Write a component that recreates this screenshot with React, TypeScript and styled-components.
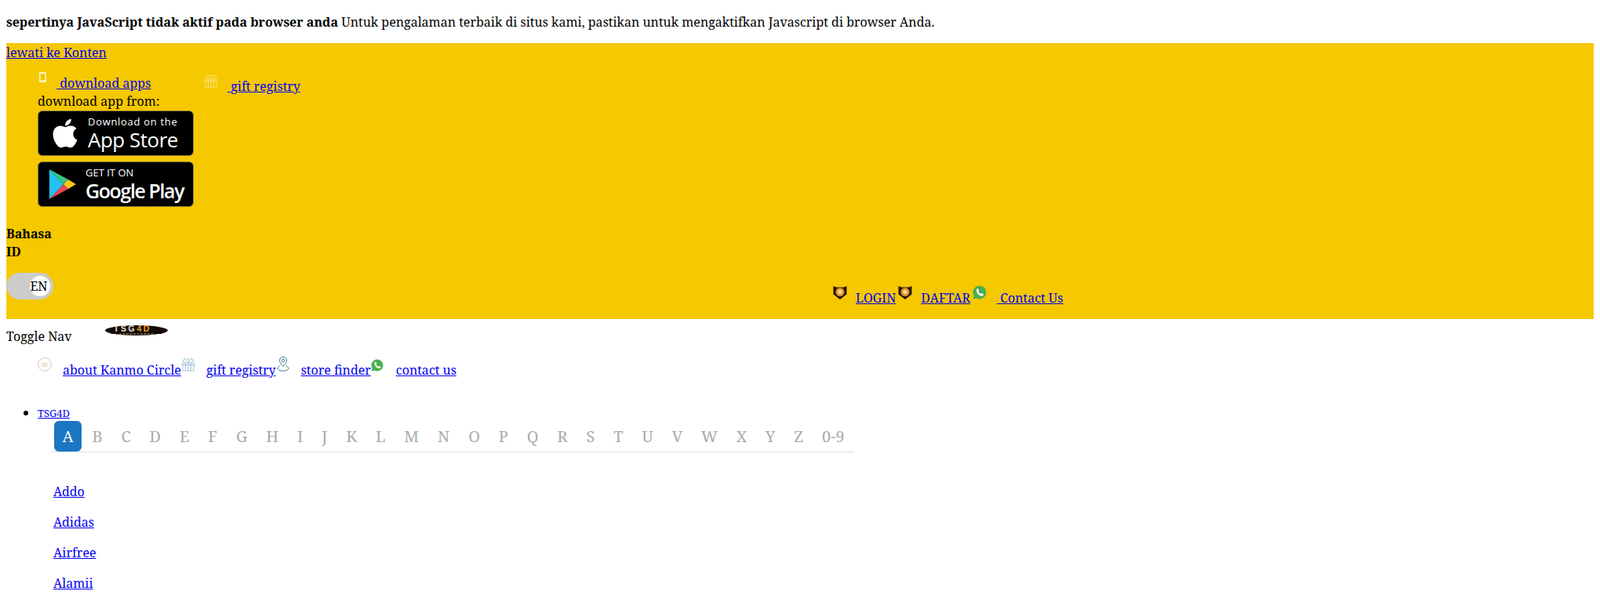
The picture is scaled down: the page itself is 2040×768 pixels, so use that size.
import styled, { createGlobalStyle } from "styled-components";
import { FaApple } from "react-icons/fa";

const letters = "A B C D E F G H I J K L M N O P Q R S T U V W X Y Z 0-9".split(" ");
const brands = ["Addo", "Adidas", "Airfree", "Alamii"];

const GlobalStyle = createGlobalStyle`
  html {
    overflow: hidden;
    background: #fff;
  }
  body {
    margin: 8px;
    color: #000;
    font-family: "Noto Serif", "DejaVu Serif", serif;
    font-size: 16px;
  }
  a {
    color: #0000ee;
    text-decoration: underline;
  }
`;

const PhoneIcon = () => (
  <svg width="18" height="18" viewBox="0 0 18 18">
    <rect x="2" y="2" width="9" height="13" rx="1.500" fill="#fff6c8" />
    <rect x="3.500" y="4" width="6" height="8.500" fill="#f5c800" />
  </svg>
);

const GiftIcon = ({ color }: { color: string }) => (
  <svg width="18" height="18" viewBox="0 0 18 18" fill="none" stroke={color} strokeWidth="0.8">
    <path d="M1 7h16v2.500H1ZM2 9.500h14V17H2Z" />
    <path d="M5.500 7v10M9 7v10M12.500 7v10" />
    <path d="M5 7 2 3.500 4 3l.5-2L7 3.500 9 1l2 2.500L13.500 1l.5 2 2 .5L13 7" />
    <path d="M7 3.500 9 7l2-3.500" />
  </svg>
);

const CircleIcon = () => (
  <svg width="18" height="18" viewBox="0 0 18 18" fill="none">
    <circle cx="9" cy="9" r="8.300" stroke="#c9c1b4" strokeWidth="0.9" />
    <path d="M6 7h6M4 9.200h10M5.500 11.400h7" stroke="#dcc9a6" strokeWidth="0.9" />
  </svg>
);

const PinIcon = () => (
  <svg width="18" height="20" viewBox="0 0 18 20" fill="none" stroke="#3f7f8f" strokeWidth="1">
    <path d="M9 13.500C6.300 10.300 4.500 8.300 4.500 5.800a4.500 4.500 0 0 1 9 0c0 2.500-1.800 4.500-4.500 7.700Z" />
    <circle cx="9" cy="5.800" r="1.800" />
    <path d="M5.500 12 1.500 15.800 5 19h8l3.500-3.200L12.500 12" />
  </svg>
);

const ChatIcon = ({ size }: { size: number }) => (
  <svg width={size} height={size} viewBox="0 0 16 16">
    <path d="M8 .5a7.500 7.500 0 1 1-3.600 14.100L.6 15.500l1-3.600A7.500 7.500 0 0 1 8 .5Z" fill="#4cae50" />
    <path
      d="M5.500 3.800c-.8.500-1.300 1.300-1.100 2.400.4 2.600 3 5.300 5.500 5.700 1.100.2 2-.3 2.500-1.100.2-.4.100-.7-.2-.9l-1.500-.9c-.3-.2-.6-.1-.8.100l-.5.600c-1.200-.4-2.400-1.600-2.900-2.900l.6-.5c.2-.2.300-.5.100-.8l-.9-1.500c-.1-.2-.3-.3-.3-.2Z"
      fill="#fff"
    />
  </svg>
);

const CrestIcon = () => (
  <svg width="18" height="18" viewBox="0 0 18 18">
    <path d="M0.500 1 4.500 2.500h9L17.500 1v10.500L9 18 .5 11.500Z" fill="#2a1505" />
    <circle cx="9" cy="8.500" r="5.500" fill="#d9932c" />
    <circle cx="9" cy="8.500" r="2.800" fill="#f7d98a" />
  </svg>
);

const PlayIcon = () => (
  <svg width="34" height="38" viewBox="0 0 34 38">
    <path d="M0 0v38l18-19Z" fill="#22c3f3" />
    <path d="M0 0 24 13 18 19Z" fill="#35c779" />
    <path d="M0 38 24 25 18 19Z" fill="#ee4454" />
    <path d="M24 13 34 19 24 25 18 19Z" fill="#fcc419" />
  </svg>
);

const TsgLogo = () => (
  <svg width="80" height="13" viewBox="0 0 80 13" overflow="visible">
    <ellipse cx="40" cy="6.500" rx="40" ry="6.500" fill="#150a03" />
    <text x="11" y="8.300" fontFamily="Liberation Sans, sans-serif" fontWeight="700" fontSize="10.500" letterSpacing="2.600" fill="#e8e4da">
      TSG
      <tspan fill="#f0a020">4D</tspan>
    </text>
    <path d="M18 11h44" stroke="#cfc7b8" strokeWidth="0.8" strokeDasharray="3 1.500" />
  </svg>
);

export default function App() {
  return (
    <>
      <GlobalStyle />
      <Notice>
        <strong>sepertinya JavaScript tidak aktif pada browser anda</strong> Untuk pengalaman
        terbaik di situs kami, pastikan untuk mengaktifkan Javascript di browser Anda.
      </Notice>

      <TopPanel>
        <SkipLink href="#content">lewati ke Konten</SkipLink>
        <TopLinks>
          <DownloadItem>
            <IconLink href="#apps">
              <PhoneIcon />
              <LinkLabel $gap={6}>{"\u00a0"}download apps</LinkLabel>
            </IconLink>
            <div>download app from:</div>
            <Badge $gap={8} $inset={13}>
              <FaApple size={42} color="#fff" />
              <BadgeText>
                <BadgeSmall>Download on the</BadgeSmall>
                <BadgeLarge>App Store</BadgeLarge>
              </BadgeText>
            </Badge>
            <Badge $gap={12} $inset={14}>
              <PlayIcon />
              <BadgeText>
                <BadgeSmall $upper>GET IT ON</BadgeSmall>
                <BadgeLarge $google>Google Play</BadgeLarge>
              </BadgeText>
            </Badge>
          </DownloadItem>
          <GiftItem>
            <IconLink href="#gift">
              <GiftIcon color="#fbe58a" />
              <LinkLabel $gap={12}>{"\u00a0"}gift registry</LinkLabel>
            </IconLink>
          </GiftItem>
        </TopLinks>

        <LanguageHeading>Bahasa</LanguageHeading>
        <LanguageHeading>ID</LanguageHeading>

        <BottomBar>
          <Toggle>
            <Knob>EN</Knob>
          </Toggle>
          <AccountLinks>
            <IconLink href="#login">
              <CrestIcon />
              <LinkLabel $gap={11}>LOGIN</LinkLabel>
            </IconLink>
            <IconLink href="#register">
              <CrestIcon />
              <LinkLabel $gap={11}>DAFTAR</LinkLabel>
            </IconLink>
            <IconLink href="#contact">
              <ChatIcon size={18} />
              <LinkLabel $gap={13}>{"\u00a0"}Contact Us</LinkLabel>
            </IconLink>
          </AccountLinks>
        </BottomBar>
      </TopPanel>

      <BrandRow>
        <span>Toggle Nav</span>
        <LogoLink href="#home">
          <TsgLogo />
        </LogoLink>
      </BrandRow>

      <ServiceLinks>
        <IconLink href="#about">
          <CircleIcon />
          <LinkLabel $gap={14}>about Kanmo Circle</LinkLabel>
        </IconLink>
        <IconLink href="#gift">
          <GiftIcon color="#8fb8cc" />
          <LinkLabel $gap={14}>gift registry</LinkLabel>
        </IconLink>
        <IconLink href="#stores">
          <PinIcon />
          <LinkLabel $gap={14}>store finder</LinkLabel>
        </IconLink>
        <IconLink href="#contact">
          <ChatIcon size={16} />
          <LinkLabel $gap={16}>contact us</LinkLabel>
        </IconLink>
      </ServiceLinks>

      <MenuList>
        <li>
          <SmallLink href="#tsg4d">TSG4D</SmallLink>
          <Tabs>
            {letters.map((letter, index) => (
              <Tab key={letter} $active={index === 0}>
                {letter}
              </Tab>
            ))}
          </Tabs>
          <BrandList>
            {brands.map((brand) => (
              <a key={brand} href="#brand">
                {brand}
              </a>
            ))}
          </BrandList>
        </li>
      </MenuList>
    </>
  );
}

const Notice = styled.p`
  margin: 8px 0 15px;
  padding-top: 1px;
  line-height: 23px;
`;

const TopPanel = styled.div`
  background: #f5c800;
  height: 352px;
  line-height: 23px;
`;

const SkipLink = styled.a`
  display: block;
  width: max-content;
  padding-top: 1px;
`;

const TopLinks = styled.div`
  display: flex;
  padding: 11px 0 0 40px;
  height: 197px;
`;

const DownloadItem = styled.div`
  width: 212px;
`;

const GiftItem = styled.div`
  padding-top: 4px;
`;

const IconLink = styled.a`
  svg {
    vertical-align: 4px;
  }
`;

const LinkLabel = styled.span<{ $gap: number }>`
  margin-left: ${(p) => p.$gap}px;
`;

const Badge = styled.div<{ $gap: number; $inset: number }>`
  width: 199px;
  height: 58px;
  margin-bottom: 7px;
  box-sizing: border-box;
  display: flex;
  align-items: center;
  gap: ${(p) => p.$gap}px;
  padding-left: ${(p) => p.$inset}px;
  background: #000;
  border: 1px solid #8a7a3a;
  border-radius: 6px;
  color: #fff;
  font-family: "Open Sans", sans-serif;
`;

const BadgeText = styled.div`
  display: flex;
  flex-direction: column;
`;

const BadgeSmall = styled.span<{ $upper?: boolean }>`
  font-size: 13px;
  line-height: 16px;
  letter-spacing: ${(p) => (p.$upper ? "0" : "0.7px")};
`;

const BadgeLarge = styled.span<{ $google?: boolean }>`
  font-size: ${(p) => (p.$google ? "25px" : "26px")};
  line-height: 30px;
  font-weight: ${(p) => (p.$google ? 600 : 400)};
  letter-spacing: ${(p) => (p.$google ? "-1.4px" : "-0.5px")};
`;

const LanguageHeading = styled.div`
  font-weight: 700;
`;

const BottomBar = styled.div`
  display: flex;
  align-items: flex-end;
  padding-top: 15px;
`;

const Toggle = styled.div`
  width: 60px;
  height: 34px;
  display: flex;
  align-items: center;
  justify-content: flex-end;
  padding-right: 4px;
  box-sizing: border-box;
  background: #ccc;
  border-radius: 17px;
`;

const Knob = styled.div`
  width: 26px;
  height: 26px;
  display: flex;
  align-items: center;
  justify-content: center;
  padding-right: 3px;
  box-sizing: border-box;
  background: #fff;
  border-radius: 50%;
`;

const AccountLinks = styled.div`
  display: flex;
  align-items: baseline;
  gap: 3px;
  margin: 0 0 -10px 994px;
  white-space: nowrap;
`;

const BrandRow = styled.div`
  display: flex;
  height: 42px;
  line-height: 23px;
  padding-top: 11px;
  box-sizing: border-box;
`;

const LogoLink = styled.a`
  height: 13px;
  margin: -3px 0 0 42px;
  line-height: 0;
`;

const ServiceLinks = styled.div`
  padding: 5px 0 0 40px;
  line-height: 23px;
  white-space: nowrap;
`;

const MenuList = styled.ul`
  margin: 31px 0 0;
  padding-left: 40px;
  line-height: 23px;
`;

const SmallLink = styled.a`
  display: block;
  width: max-content;
  font-size: 13px;
  line-height: 20px;
`;

const Tabs = styled.div`
  display: flex;
  align-items: center;
  width: 1022px;
  margin-left: 18px;
  padding-left: 1.500px;
  box-sizing: border-box;
  border-bottom: 1px solid #ddd;
`;

const Tab = styled.span<{ $active?: boolean }>`
  flex-shrink: 0;
  padding: 7px 10px;
  margin: 0 1.950px;
  height: 39px;
  box-sizing: border-box;
  font-size: 20px;
  line-height: 25px;
  white-space: nowrap;
  color: ${(p) => (p.$active ? "#fff" : "#aaa")};
  background: ${(p) => (p.$active ? "#1a76c2" : "transparent")};
  border-radius: ${(p) => (p.$active ? "6px" : "0")};
`;

const BrandList = styled.div`
  display: flex;
  flex-direction: column;
  align-items: flex-start;
  gap: 16px;
  margin: 39px 0 0 20px;
`;
